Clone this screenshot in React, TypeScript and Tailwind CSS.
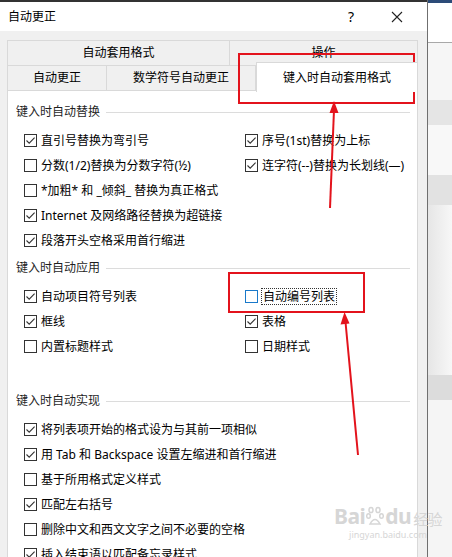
import React from "react";

const font = { fontFamily: "'Noto Sans', 'Noto Sans CJK SC', sans-serif" };

function Box({ checked, focus }: { checked?: boolean; focus?: boolean }) {
    return (
        <span className={`w-[13px] h-[13px] shrink-0 bg-white border ${focus ? "border-[#1979ca]" : "border-[#333]"} flex items-center justify-center`}>
            {checked && (
                <svg width="11" height="11" viewBox="0 0 11 11">
                    <path d="M1.5 5.5 L4.2 8.2 L9.6 2.6" fill="none" stroke="#333" strokeWidth="1.1" />
                </svg>
            )}
        </span>
    );
}

function Opt({ label, checked, focus }: { label?: string; checked?: boolean; focus?: boolean }) {
    if (!label) return <div className="h-[25px] shrink-0" />;
    return (
        <div className="h-[25px] shrink-0 flex items-center gap-[4px] text-[12px] text-black whitespace-nowrap">
            <Box checked={checked} focus={focus} />
            <span className={focus ? "outline outline-1 outline-dotted outline-[#333] px-px leading-[15px]" : ""}>{label}</span>
        </div>
    );
}

function Header({ title, className = "" }: { title: string; className?: string }) {
    return (
        <div className={`h-[16px] shrink-0 flex items-center pl-[8px] pr-[7px] ${className}`}>
            <span className="text-[12px] text-[#1f1f1f] whitespace-nowrap">{title}</span>
            <div className="flex-1 h-px bg-[#dcdcdc] ml-[6px]" />
        </div>
    );
}

export default function App() {
    return (
        <div className="relative w-[452px] h-[557px] overflow-hidden flex bg-white" style={font}>
            {/* dialog */}
            <div className="w-[427px] h-full flex flex-col overflow-hidden">
                <div className="h-[2px] shrink-0 bg-[#333]" />
                <div className="h-[29px] shrink-0 bg-white flex items-center px-[8px] text-[12px] text-black">
                    <span className="flex-1">自动更正</span>
                    <span className="text-[14px] mr-[37px]">?</span>
                    <svg width="12" height="12" viewBox="0 0 12 12" className="mr-[16px]">
                        <path d="M1 1 L11 11 M11 1 L1 11" stroke="#222" strokeWidth="1.1" />
                    </svg>
                </div>
                <div className="flex-1 bg-[#f0f0f0] pt-[9px] pl-[7px] pr-[9px] flex flex-col">
                    {/* tabs */}
                    <div className="flex shrink-0 h-[25px] text-[12px] text-black">
                        <div className="w-[223px] border border-b-0 border-[#d9d9d9] flex items-center justify-center">自动套用格式</div>
                        <div className="flex-1 border border-l-0 border-b-0 border-[#d9d9d9] flex items-center justify-center">操作</div>
                    </div>
                    <div className="flex shrink-0 h-[25px] text-[12px] text-black">
                        <div className="w-[100px] border border-b-0 border-[#d9d9d9] flex items-center justify-center">自动更正</div>
                        <div className="w-[149px] border border-l-0 border-b-0 border-[#d9d9d9] flex items-center justify-center">数学符号自动更正</div>
                        <div className="flex-1 h-[30px] -mt-[3px] -mb-[2px] bg-white border border-b-0 border-[#d9d9d9] relative z-10 flex items-center justify-center">
                            键入时自动套用格式
                        </div>
                    </div>
                    {/* panel */}
                    <div className="flex-1 shrink-0 bg-white border border-[#d9d9d9] pt-[13px] flex flex-col">
                        <Header title="键入时自动替换" />
                        <div className="grid grid-cols-[221px_1fr] pl-[16px] mt-[8px]">
                            <Opt label="直引号替换为弯引号" checked />
                            <Opt label="序号(1st)替换为上标" checked />
                            <Opt label="分数(1/2)替换为分数字符(½)" />
                            <Opt label="连字符(--)替换为长划线(—)" checked />
                            <Opt label="*加粗* 和 _倾斜_ 替换为真正格式" />
                            <Opt />
                            <Opt label="Internet 及网络路径替换为超链接" checked />
                            <Opt />
                            <Opt label="段落开头空格采用首行缩进" checked />
                            <Opt />
                        </div>
                        <Header title="键入时自动应用" className="mt-[7px]" />
                        <div className="grid grid-cols-[221px_1fr] pl-[16px] mt-[8px]">
                            <Opt label="自动项目符号列表" checked />
                            <Opt label="自动编号列表" focus />
                            <Opt label="框线" checked />
                            <Opt label="表格" checked />
                            <Opt label="内置标题样式" />
                            <Opt label="日期样式" />
                        </div>
                        <Header title="键入时自动实现" className="mt-[34px]" />
                        <div className="flex flex-col pl-[16px] mt-[8px]">
                            <Opt label="将列表项开始的格式设为与其前一项相似" checked />
                            <Opt label="用 Tab 和 Backspace 设置左缩进和首行缩进" checked />
                            <Opt label="基于所用格式定义样式" />
                            <Opt label="匹配左右括号" checked />
                            <Opt label="删除中文和西文文字之间不必要的空格" />
                            <Opt label="插入结束语以匹配备忘录样式" checked />
                        </div>
                    </div>
                </div>
            </div>
            {/* background window behind */}
            <div className="w-[25px] h-full flex flex-col border-l border-[#6f6f6f]">
                <div className="h-[3px] shrink-0 bg-[#2c4b78]" />
                <div className="h-[39px] shrink-0 bg-white" />
                <div className="h-px shrink-0 bg-[#a8a8a8]" />
                <div className="h-[57px] shrink-0 bg-[#f6f6f6]" />
                <div className="h-[25px] shrink-0 bg-[#e5e5e5]" />
                <div className="h-[50px] shrink-0 bg-[#f8f8f8]" />
                <div className="h-[30px] shrink-0 bg-[#e2e2e2]" />
                <div className="h-[170px] shrink-0 bg-gradient-to-r from-[#e6e6e6] to-[#f7f7f7]" />
                <div className="h-[25px] shrink-0 bg-[#dcdcdc]" />
                <div className="flex-1 bg-[#f5f5f5]" />
            </div>

            {/* annotations */}
            <div className="absolute left-[238px] top-[53px] w-[177px] h-[51px] border-2 border-[#e3131c]" />
            <div className="absolute left-[228px] top-[272px] w-[137px] h-[41px] border-2 border-[#e3131c]" />
            <svg className="absolute left-0 top-0 pointer-events-none" width="452" height="557">
                <line x1="330" y1="208" x2="334" y2="110" stroke="#e3131c" strokeWidth="2" />
                <polygon points="334,101 329.5,113 338.5,113" fill="#e3131c" />
                <line x1="358" y1="455" x2="345.5" y2="322" stroke="#e3131c" strokeWidth="2" />
                <polygon points="344.5,312 340.5,324.5 349.5,323.5" fill="#e3131c" />
            </svg>

            {/* watermark */}
            <div className="absolute left-[334px] top-[506px] flex flex-col items-center pointer-events-none text-[#d6d6d6]">
                <div className="flex items-end text-[21px] font-bold leading-none tracking-tight">
                    <span>Bai</span>
                    <svg width="18" height="20" viewBox="0 0 18 20" className="mx-[1px] mb-[1px]">
                        <g fill="none" stroke="#d6d6d6" strokeWidth="1.5">
                            <ellipse cx="5" cy="4" rx="2" ry="2.6" />
                            <ellipse cx="12" cy="4" rx="2" ry="2.6" />
                            <ellipse cx="2.5" cy="10" rx="1.8" ry="2.3" />
                            <ellipse cx="15.5" cy="10" rx="1.8" ry="2.3" />
                            <path d="M4 18 Q9 9 14 18 Z" />
                        </g>
                    </svg>
                    <span>du</span>
                    <span className="text-[15px] ml-[2px] font-normal">经验</span>
                </div>
                <div className="text-[9px] leading-[12px] mt-[2px]">jingyan.baidu.com</div>
            </div>
        </div>
    );
}
